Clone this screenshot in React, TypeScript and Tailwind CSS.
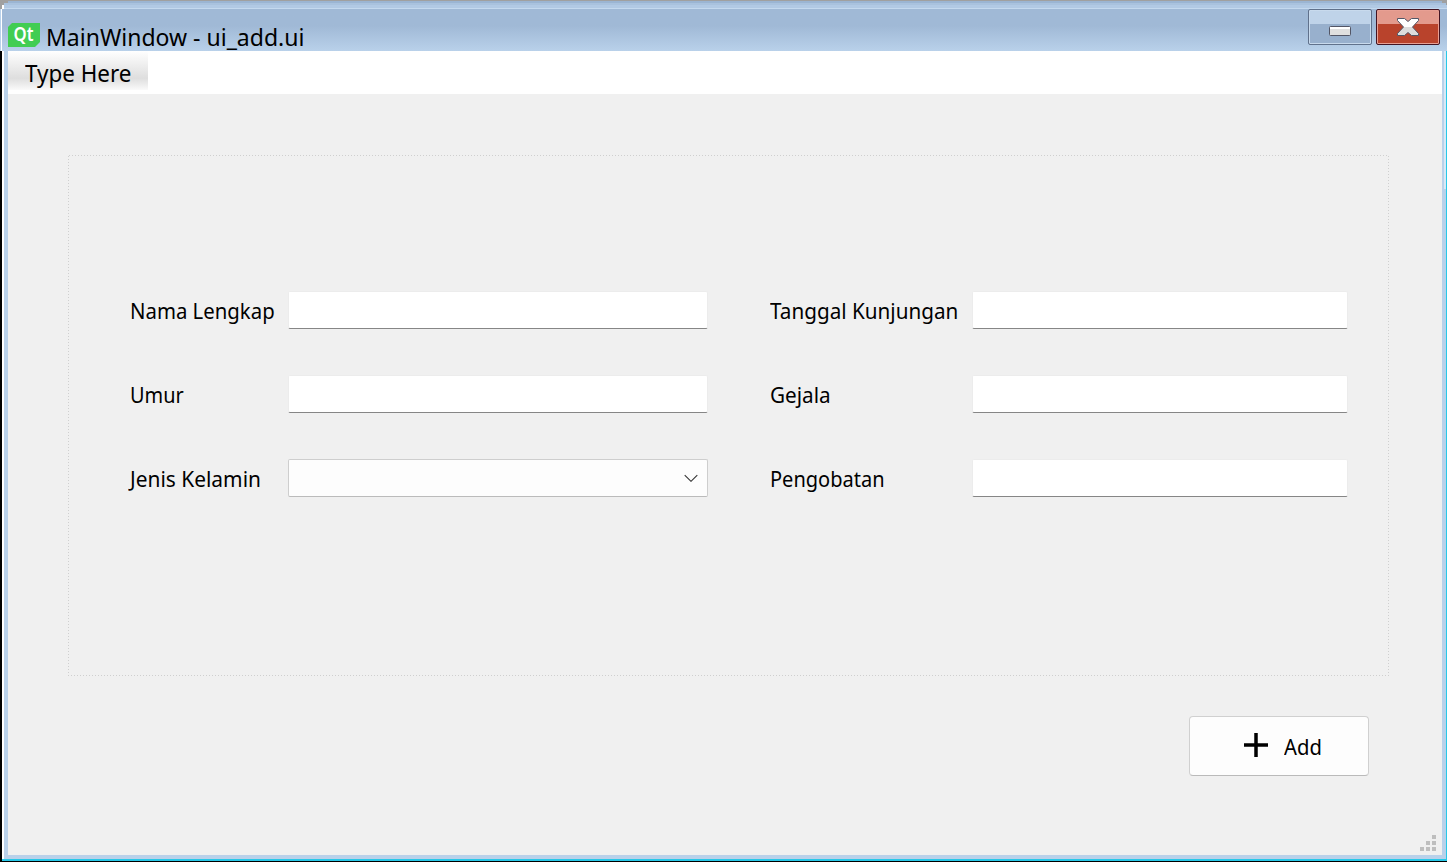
import React from "react";

function Label({ text, width, stretch }: { text: string; width: string; stretch: string }) {
  return (
    <label className={`${width} shrink-0 whitespace-nowrap text-[22px] leading-[38px]`}>
      <span className={`${stretch} inline-block origin-left`}>{text}</span>
    </label>
  );
}

function Field({ width }: { width: string }) {
  return (
    <input
      className={`${width} h-[38px] rounded-[2px] border border-[#ececec] border-b-[#868686] bg-white px-2 outline-none`}
    />
  );
}

export default function App() {
  return (
    <div className="relative flex h-[862px] w-[1447px] flex-col overflow-hidden bg-black font-['Noto_Sans',sans-serif] text-black">
      <header className="flex h-[51px] shrink-0 flex-col bg-[#b9d1ea]">
        <div className="flex h-[9px] shrink-0 flex-col bg-[#a0a0a0]">
          <div className="mr-[5px] mt-px ml-2 h-[2px] bg-[#9bb5d3]" />
          <div className="mr-px ml-1 h-[2px] bg-[#a9c2de]" />
          <div className="ml-[2px] h-[3px] border-l-2 border-white bg-[#b1c9e4]" />
          <div className="ml-[2px] h-px border-l-2 border-white bg-[#c4d9ef]" />
        </div>
        <div className="ml-px flex h-[42px] border-l border-white bg-linear-to-b from-[#a0b9d6] from-40% to-[#b9d1ea] pl-[6px]">
          <svg className="mt-[14px] h-6 w-8 overflow-visible" viewBox="0 0 32 24">
            <path d="M4 0H32V19L27 24H0V4Z" fill="#41cd52" />
            <text x="15.5" y="18" textAnchor="middle" fill="white" fontSize="19" fontWeight="600" textLength="20" lengthAdjust="spacingAndGlyphs">Qt</text>
          </svg>
          <h1 className="ml-[6px] mt-[12px] whitespace-nowrap text-[23px] leading-[32px]">MainWindow - ui_add.ui</h1>
          <div className="ml-auto mr-[7px] flex gap-1">
            <button className="flex h-9 w-16 items-center justify-center rounded-[2px] border border-[#60718b] bg-linear-to-b from-[#bfd3e9] from-40% to-[#98b0cd] to-40% shadow-[inset_0_0_0_1px_#c8daed]">
              <svg className="mt-[7px] h-[10px] w-[22px]" viewBox="0 0 22 10">
                <rect x=".5" y=".5" width="21" height="9" rx="1" fill="#dfdfdf" stroke="#535666" />
                <path d="M1 2H21" stroke="white" strokeWidth="2" />
              </svg>
            </button>
            <button className="flex h-9 w-16 items-center justify-center rounded-[2px] border border-[#431422] bg-linear-to-b from-[#e39a8d] from-40% to-[#b9432c] to-40% shadow-[inset_0_0_0_1px_#e8a094]">
              <svg className="h-[18px] w-[22px]" viewBox="0 0 22 18">
                <defs><linearGradient id="x" x2="0" y2="1"><stop offset=".5" stopColor="#fff" /><stop offset=".5" stopColor="#dcdcdc" /></linearGradient></defs>
                <path d="M.5 .5H7.5L11 3.5L14.5 .5H21.5V2.5L15.5 9L21.5 15.5V17.5H14.5L11 14.5L7.5 17.5H.5V15.5L6.5 9L.5 2.5Z" fill="url(#x)" stroke="#535666" />
              </svg>
            </button>
          </div>
        </div>
      </header>
      <div className="ml-[2px] flex h-[810px] flex-col border-b-2 border-b-[#28c8e8]">
        <div className="flex flex-1 border-l-2 border-white">
          <div className="flex flex-1 flex-col border-b-4 border-l-4 border-[#b9d1ea] bg-[#f0f0f0]">
            <nav className="flex h-[43px] shrink-0 bg-white">
              <div className="h-[39px] w-[140px] whitespace-nowrap bg-linear-to-b from-white via-[#dedede] via-70% to-[#fafafa] pl-[17px] text-[23px] leading-[45px]">
                <span className="inline-block origin-left scale-x-[.975]">Type Here</span>
              </div>
            </nav>
            <main className="flex flex-1 flex-col pl-[60px] pt-[61px]">
              <section className="flex h-[521px] w-[1321px] gap-[62px] bg-[image:repeating-linear-gradient(to_right,transparent_0_1px,#cfcfcf_1px_2px,transparent_2px_3px),repeating-linear-gradient(to_right,#cfcfcf_0_1px,transparent_1px_3px),repeating-linear-gradient(to_bottom,transparent_0_1px,#cfcfcf_1px_2px,transparent_2px_3px),repeating-linear-gradient(to_bottom,transparent_0_1px,#cfcfcf_1px_2px,transparent_2px_3px)] bg-[size:100%_1px,100%_1px,1px_100%,1px_100%] bg-[position:0_0,0_100%,0_0,100%_0] bg-no-repeat pl-[62px] pt-[136px]">
                <div className="flex flex-col gap-[46px]">
                  <div className="flex"><Label text="Nama Lengkap" width="w-[158px]" stretch="scale-x-[.925]" /><Field width="w-[420px]" /></div>
                  <div className="flex"><Label text="Umur" width="w-[158px]" stretch="scale-x-[.905]" /><Field width="w-[420px]" /></div>
                  <div className="flex">
                    <Label text="Jenis Kelamin" width="w-[158px]" stretch="scale-x-[.95]" />
                    <div className="flex h-[38px] w-[420px] items-center justify-end rounded-[2px] border border-[#cecece] border-b-[#bbbbbb] bg-[#fdfdfd] pr-[9px]">
                      <svg className="h-2 w-[14px]" viewBox="0 0 14 8"><path d="M.7 1.2L7 7.3L13.3 1.2" fill="none" stroke="#333" strokeWidth="1.1" /></svg>
                    </div>
                  </div>
                </div>
                <div className="flex flex-col gap-[46px]">
                  <div className="flex"><Label text="Tanggal Kunjungan" width="w-[202px]" stretch="scale-x-[.94]" /><Field width="w-[376px]" /></div>
                  <div className="flex"><Label text="Gejala" width="w-[202px]" stretch="scale-x-[.94]" /><Field width="w-[376px]" /></div>
                  <div className="flex"><Label text="Pengobatan" width="w-[202px]" stretch="scale-x-[.91]" /><Field width="w-[376px]" /></div>
                </div>
              </section>
              <button className="ml-[1121px] mt-[40px] flex h-[60px] w-[180px] rounded-[4px] border border-[#d0d0d0] border-b-[#bababa] bg-[#fdfdfd] pl-[54px] pt-[16px]">
                <svg className="h-6 w-6" viewBox="0 0 24 24"><path d="M12 0V24M0 12H24" stroke="black" strokeWidth="3.5" /></svg>
                <span className="-mt-[2px] ml-4 origin-left scale-x-[.92] text-[22px] leading-[30px]">Add</span>
              </button>
              <svg className="ml-auto mb-1 mr-[6px] mt-auto h-4 w-4" viewBox="0 0 16 16" fill="#bebebe">
                <path d="M12 0h4v4h-4zM6 6h4v4H6zM12 6h4v4h-4zM0 12h4v4H0zM6 12h4v4H6zM12 12h4v4h-4z" />
              </svg>
            </main>
          </div>
          <div className="flex w-[5px] border-r border-[#28c8e8] bg-[#b9d1ea]">
            <div className="ml-auto h-[138px] w-[2px] bg-[#d9e8f6]" />
          </div>
        </div>
      </div>
    </div>
  );
}
